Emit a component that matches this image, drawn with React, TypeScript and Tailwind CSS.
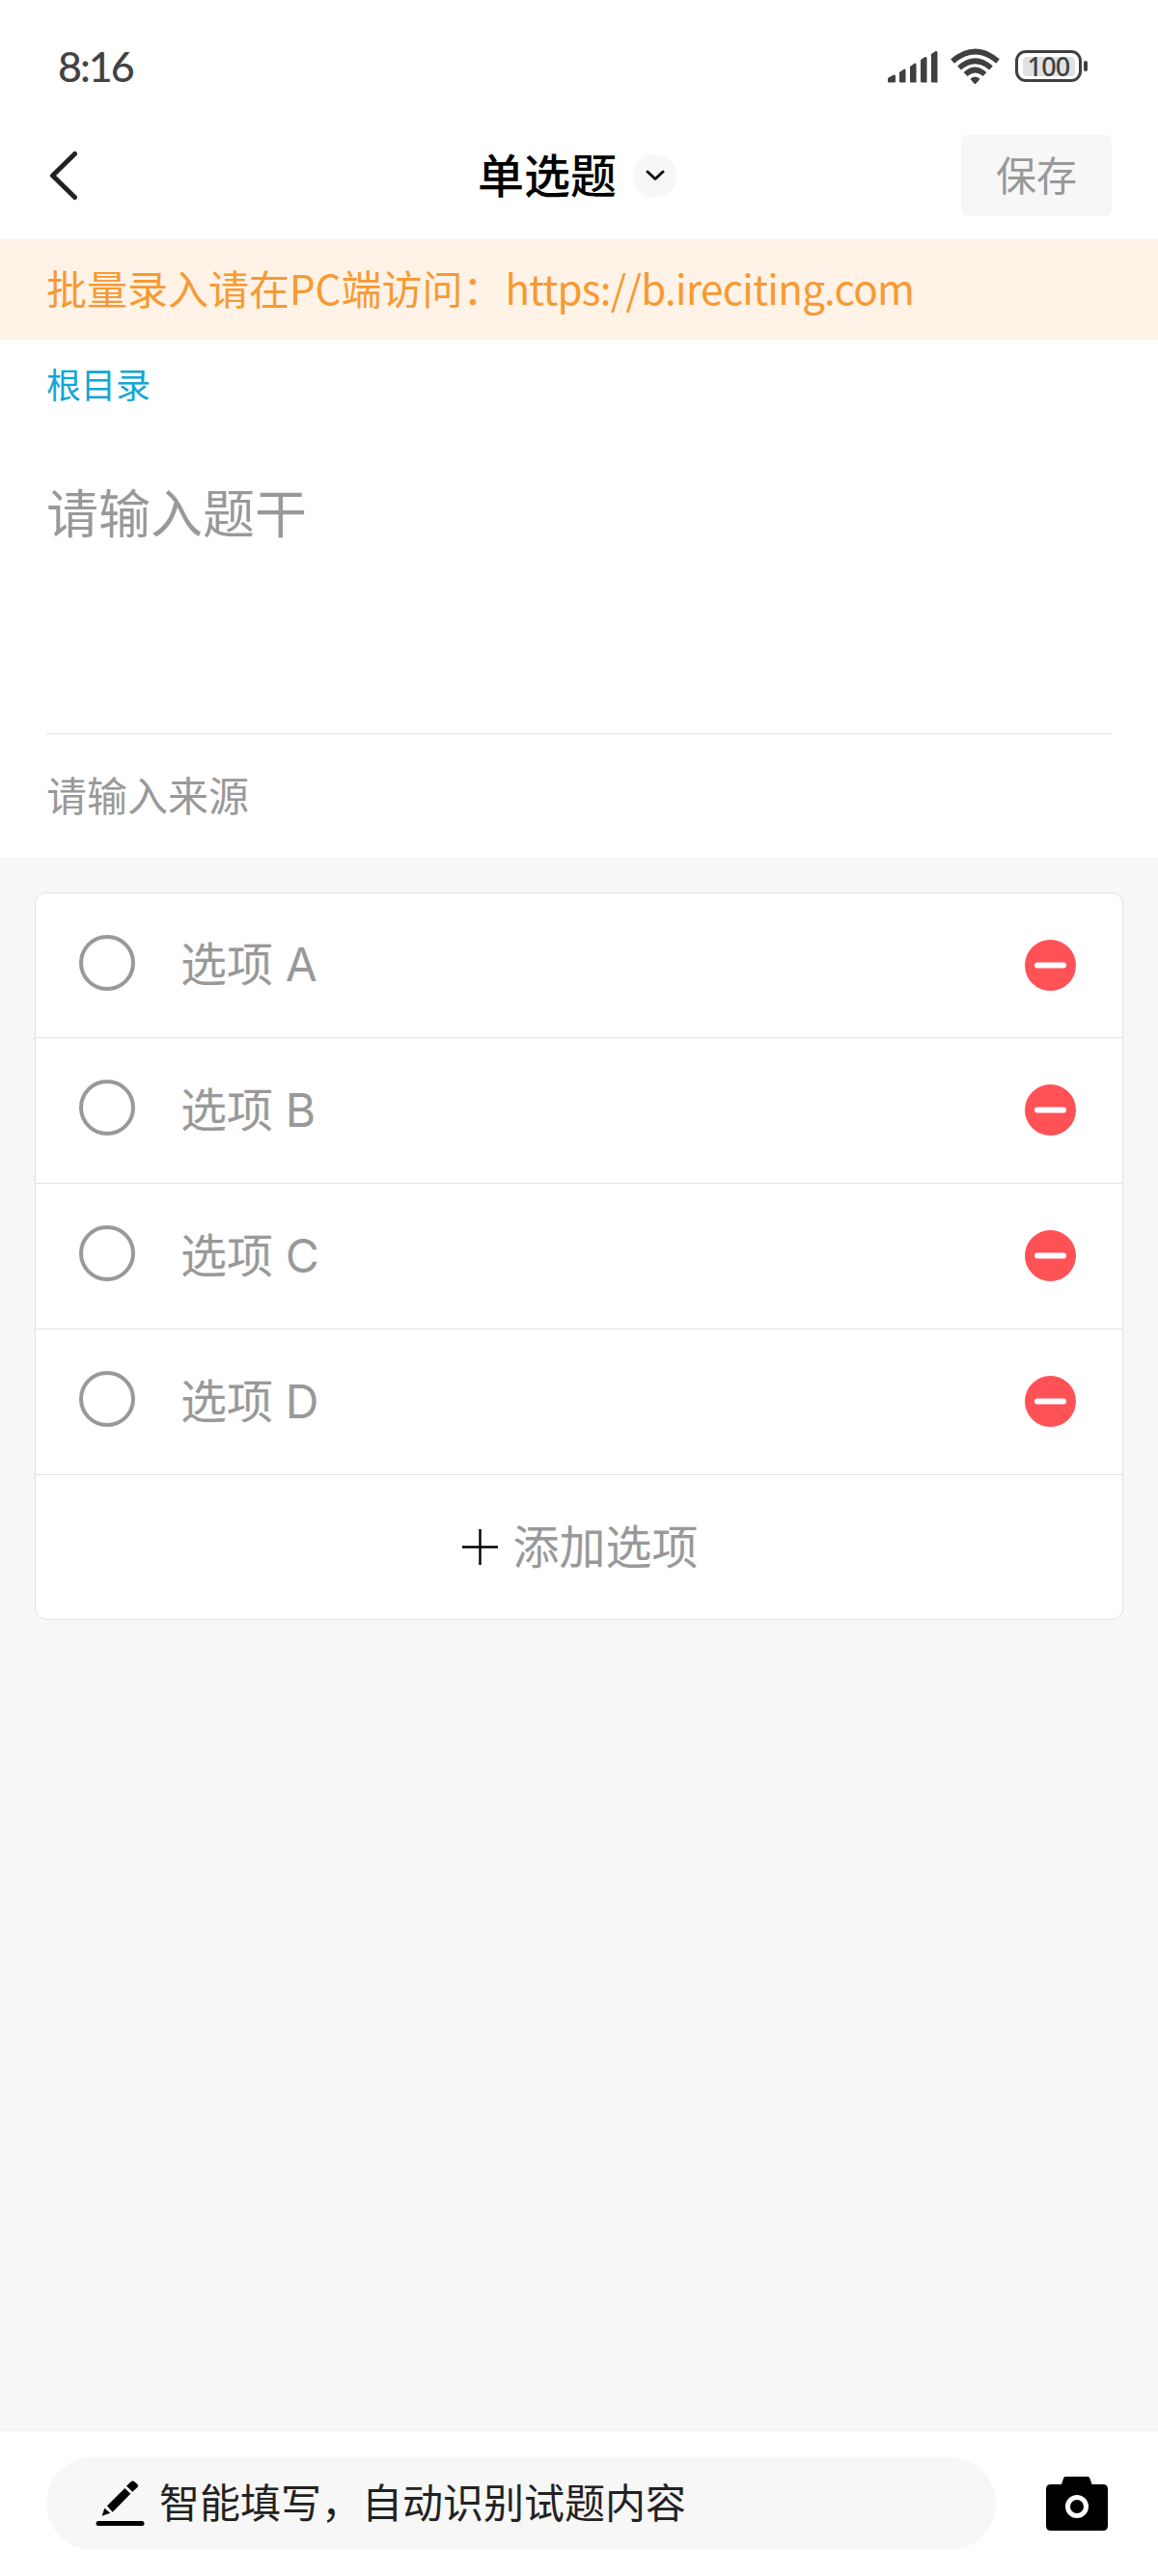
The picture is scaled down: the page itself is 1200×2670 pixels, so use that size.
import { useState } from "react"

const LINK = "https://b.ireciting.com"

function StatusBar() {
  return (
    <div className="flex h-[136px] items-center justify-between pl-[60px] pr-[73px]">
      <span className="pt-0.5 font-['Lato','Noto_Sans_CJK_SC',sans-serif] text-[43px] font-medium leading-[60px] tracking-[-2px] text-[#434343]">
        8:16
      </span>
      <div className="flex items-center pt-px text-[#404040]">
        <svg width="52" height="34" viewBox="0 0 52 34" fill="currentColor">
          <path d="M0 29 L6 25.5 Q8 25 8 27 V32.5 Q8 33.500 7 33.500 H1 Q0 33.500 0 32.500Z" />
          <path d="M12 23 L17 19.500 Q18.500 19 18.500 21 V33.500 H13 Q12 33.500 12 32.500Z" />
          <path d="M23 17 L28 13.500 Q29.500 13 29.500 15 V33.500 H24 Q23 33.500 23 32.500Z" />
          <path d="M34 10 L38.500 7 Q40.500 6.500 40.500 8.500 V33.500 H35 Q34 33.500 34 32.500Z" />
          <path d="M45 4 L49.500 1 Q51.500 0.500 51.500 2.500 V33.500 H46 Q45 33.500 45 32.500Z" />
        </svg>
        <svg className="ml-[13px]" width="51" height="38" viewBox="0 0 51 38" fill="none" stroke="currentColor" strokeWidth="5.600">
          <path d="M2 13.500 Q25.500 -6.500 49 13.500" />
          <path d="M9 20.500 Q25.500 6 42 20.500" />
          <path d="M15.500 27 Q25.500 18 35.500 27" />
          <path d="M25.500 29.500 Q29 29.500 30.500 32 L26.500 36.500 Q25.500 37.500 24.500 36.500 L20.500 32 Q22 29.500 25.500 29.500Z" fill="currentColor" stroke="none" />
        </svg>
        <div className="ml-4 flex h-[33px] w-[69px] items-center justify-center rounded-[11px] border-[3px] border-current">
          <span className="flex h-5 w-[54px] items-center justify-center rounded-[4px] bg-[#e2e2e2] pt-px font-['Noto_Sans',sans-serif] text-[27px] font-medium leading-5 tracking-[-0.8px]">
            100
          </span>
        </div>
        <span className="ml-[2px] h-[11px] w-1 rounded-[2px] bg-current" />
      </div>
    </div>
  )
}

function Header() {
  return (
    <header className="grid h-[112px] grid-cols-3 items-center px-12 pb-5">
      <button className="ml-0.5 w-fit" aria-label="返回">
        <svg width="30" height="52" viewBox="0 0 30 52" fill="none" stroke="#222" strokeWidth="5" strokeLinecap="round" strokeLinejoin="round">
          <path d="M27.500 3.500 L4.500 26 L27.500 48.500" />
        </svg>
      </button>
      <div className="flex items-center justify-center gap-[17px] pr-1">
        <h1 className="shrink-0 pb-[7px] text-[48px] font-medium leading-[72px] text-black">单选题</h1>
        <span className="flex size-[45px] shrink-0 items-center justify-center rounded-full bg-[#f7f7f7]">
          <svg width="20" height="12" viewBox="0 0 20 12" fill="none" stroke="#111" strokeWidth="3" strokeLinecap="round" strokeLinejoin="round">
            <path d="M2 2 L10 9.500 L18 2" />
          </svg>
        </span>
      </div>
      <button className="h-[84px] w-[156px] justify-self-end rounded-[6px] bg-[#f7f7f7] pb-[5px] text-[42px] text-[#999]">
        保存
      </button>
    </header>
  )
}

function MinusIcon() {
  return (
    <svg width="53" height="53" viewBox="0 0 53 53">
      <circle cx="26.500" cy="26.500" r="26.500" fill="#ff5257" />
      <rect x="10" y="23.500" width="33" height="6" rx="3" fill="#fff" />
    </svg>
  )
}

export default function App() {
  const [options, setOptions] = useState(["A", "B", "C", "D"])

  const removeOption = (option: string) => {
    setOptions(options.filter((item) => item !== option))
  }

  const addOption = () => {
    const next = "ABCDEFGHIJ".split("").find((item) => !options.includes(item))
    if (next) setOptions([...options, next].sort())
  }

  return (
    <div className="flex h-[2670px] w-[1200px] flex-col overflow-hidden bg-[#f7f7f7] font-['Noto_Sans_CJK_SC',sans-serif] text-[#999]">
      <div className="bg-white">
        <StatusBar />
        <Header />
      </div>

      <div className="flex h-[104px] shrink-0 items-center whitespace-nowrap bg-[#fff3e7] px-12 pb-1.5 text-[42px] text-[#f79a32]">
        <span>批量录入请在PC端访问：</span>
        <span className="ml-0.5 tracking-[-0.7px]">{LINK}</span>
      </div>

      {/* Question stem and source */}
      <section className="h-[537px] shrink-0 bg-white px-12">
        <p className="pt-[18px] text-[36px] leading-[54px] text-[#12a5d6]">根目录</p>
        <div className="h-[337px] border-b border-[#e2e2e2] pt-[66px] text-[54px] leading-[80px]">
          请输入题干
        </div>
        <div className="pt-[30px] text-[42px] leading-[64px]">请输入来源</div>
      </section>

      {/* Options */}
      <section className="mx-9 mt-9 rounded-[12px] border border-[#e2e2e2] bg-white">
        {options.map((option) => (
          <div key={option} className="flex h-[151px] items-center border-b border-[#e2e2e2] pl-[45px] pr-12 first:h-[150px]">
            <span className="mb-1.5 size-[58px] rounded-full border-4 border-[#999]" />
            <span className="ml-[47px] flex-1 pb-[5px] text-[48px] leading-[72px]">
              选项 <span className="ml-0.5 font-['Inter',sans-serif]">{option}</span>
            </span>
            <button className="mb-px" onClick={() => removeOption(option)} aria-label="删除">
              <MinusIcon />
            </button>
          </div>
        ))}
        <button onClick={addOption} className="flex h-[149px] w-full items-center justify-center gap-[15px] pl-[3px] text-[48px]">
          <svg width="37" height="37" viewBox="0 0 37 37" stroke="#000" strokeWidth="2.400">
            <path d="M18.500 0 V37 M0 18.500 H37" />
          </svg>
          <span className="pb-[7px]">添加选项</span>
        </button>
      </section>

      {/* Smart fill bar */}
      <footer className="mt-auto flex h-[150px] shrink-0 items-start bg-white pl-12 pr-[52px] pt-[27px]">
        <div className="flex h-24 w-[984px] items-center rounded-full bg-[#f7f7f7] pl-[51px] text-[42px] text-[#222]">
          <svg width="51" height="48" viewBox="0 0 51 48" fill="#000">
            <path d="M32 5.700 L36.500 1.500 Q38 0 40 1 L43 3.500 Q45 5.500 43.500 7 L38.300 11.700Z" />
            <path d="M30.300 8 L36.300 13.700 L17.700 32.700 L12 26.300Z" />
            <path d="M9.300 28.700 L15.300 33.700 L6.700 36.700Z" />
            <rect x="0.500" y="42" width="50" height="5" rx="2.500" />
          </svg>
          <span className="ml-[15px] pb-[7px]">智能填写，自动识别试题内容</span>
        </div>
        <svg className="ml-auto mt-5" width="64" height="56" viewBox="0 0 64 56">
          <path d="M20 0 H43 Q45 0 45.500 2 L47.500 8 H59 Q64 8 64 13 V51 Q64 56 59 56 H5 Q0 56 0 51 V13 Q0 8 5 8 H16 L18 2 Q18.500 0 20 0Z" fill="#000" />
          <circle cx="32" cy="31" r="9.500" fill="#000" stroke="#fff" strokeWidth="5" />
        </svg>
      </footer>
    </div>
  )
}
